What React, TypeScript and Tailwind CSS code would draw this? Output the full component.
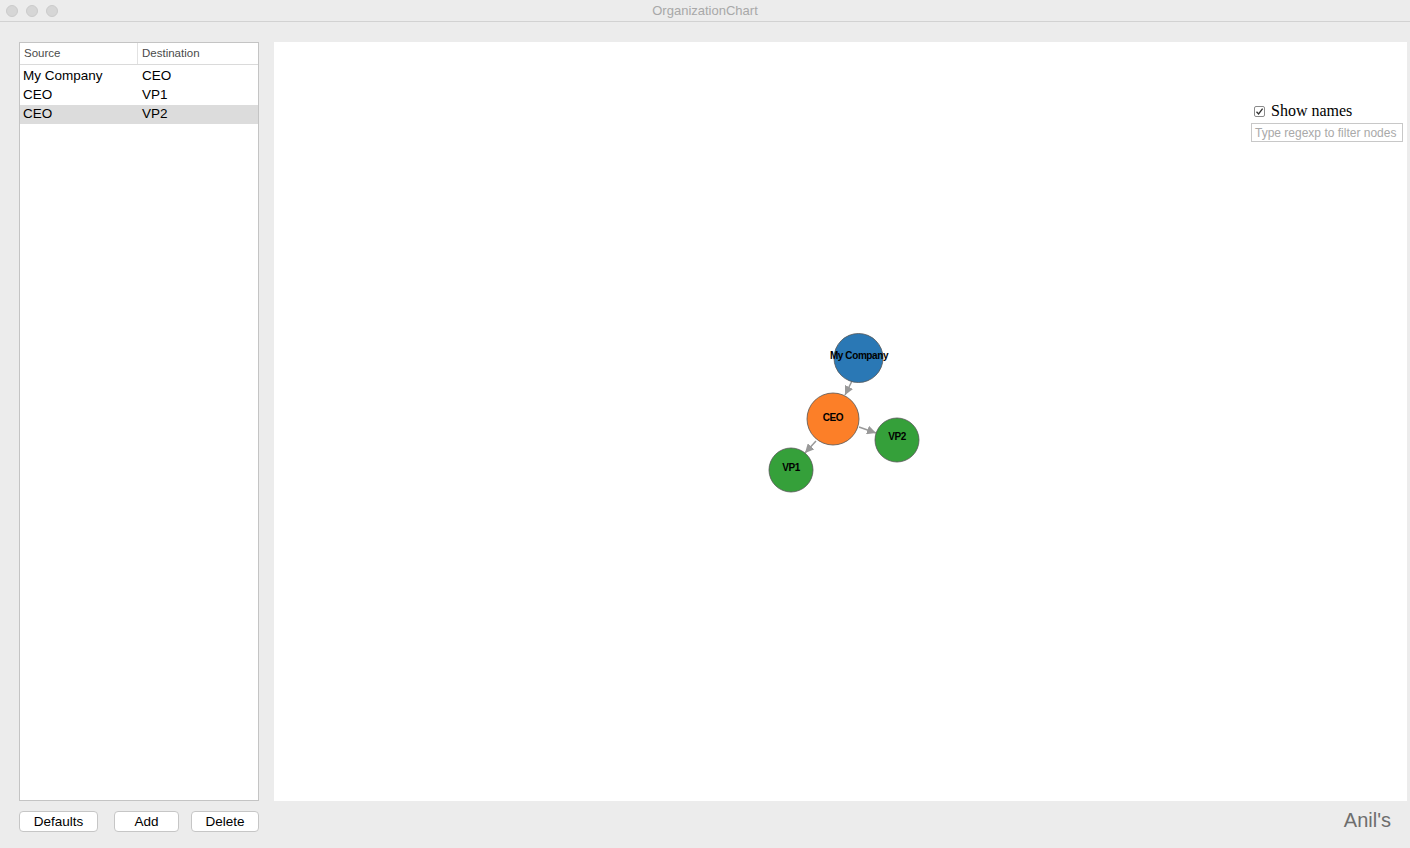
import React from "react";

const font = { fontFamily: '"Liberation Sans", Arial, sans-serif' };

function Graph() {
  return (
    <svg width="1133" height="759" className="block">
      <defs>
        <marker id="arr" viewBox="0 0 10 10" refX="10" refY="5" markerWidth="6" markerHeight="6" orient="auto">
          <path d="M0,0 L10,5 L0,10 z" fill="#999" />
        </marker>
      </defs>
      <g transform="translate(-274,-42)">
        <line x1="852" y1="381" x2="845" y2="395" stroke="#999" strokeWidth="1.5" markerEnd="url(#arr)" />
        <line x1="859" y1="427" x2="876" y2="433" stroke="#999" strokeWidth="1.5" markerEnd="url(#arr)" />
        <line x1="816" y1="441" x2="805" y2="453" stroke="#999" strokeWidth="1.5" markerEnd="url(#arr)" />
        <circle cx="858.5" cy="358" r="24.5" fill="#2a78b5" stroke="#555" strokeWidth="0.8" />
        <circle cx="833" cy="419" r="26" fill="#fc7f28" stroke="#555" strokeWidth="0.8" />
        <circle cx="897" cy="440" r="22" fill="#35a03a" stroke="#555" strokeWidth="0.8" />
        <circle cx="791" cy="470" r="22" fill="#35a03a" stroke="#555" strokeWidth="0.8" />
        <g fontFamily='"Liberation Sans", Arial, sans-serif' fontSize="10" fontWeight="bold" fill="#000" textAnchor="middle" letterSpacing="-0.4">
          <text x="859" y="359">My Company</text>
          <text x="833" y="421">CEO</text>
          <text x="897" y="440">VP2</text>
          <text x="791" y="471">VP1</text>
        </g>
      </g>
    </svg>
  );
}

export default function App() {
  const rows = [
    ["My Company", "CEO", false],
    ["CEO", "VP1", false],
    ["CEO", "VP2", true],
  ] as const;
  return (
    <div className="w-[1410px] h-[848px] bg-[#ececec] flex flex-col overflow-hidden" style={font}>
      <div className="h-[22px] shrink-0 bg-[#ececec] border-b border-[#d2d2d2] flex items-center relative">
        <div className="flex gap-[8px] pl-[6px] pt-[1px]">
          <div className="w-[12px] h-[12px] rounded-full bg-[#d6d6d6] border border-[#cbcbcb]" />
          <div className="w-[12px] h-[12px] rounded-full bg-[#d6d6d6] border border-[#cbcbcb]" />
          <div className="w-[12px] h-[12px] rounded-full bg-[#d6d6d6] border border-[#cbcbcb]" />
        </div>
        <div className="absolute inset-0 flex items-center justify-center pt-[1px] text-[13px] text-[#a8a8a8]">OrganizationChart</div>
      </div>
      <div className="flex pt-[20px] pl-[19px] gap-[15px]">
        <div className="w-[240px] h-[759px] bg-white border border-[#c4c4c4] flex flex-col">
          <div className="h-[22px] border-b border-[#dadada] flex items-center text-[11.5px] text-[#4a4a4a]">
            <div className="w-[118px] pl-[4px] h-full flex items-center border-r border-[#e2e2e2]">Source</div>
            <div className="pl-[4px]">Destination</div>
          </div>
          <div className="pt-[2px]">
            {rows.map(([s, d, sel], i) => (
              <div key={i} className={`h-[19px] flex items-center text-[13.5px] text-black ${sel ? "bg-[#dcdcdc]" : ""}`}>
                <div className="w-[119px] pl-[3px]">{s}</div>
                <div className="pl-[3px]">{d}</div>
              </div>
            ))}
          </div>
        </div>
        <div className="w-[1133px] h-[759px] bg-white relative">
          <Graph />
          <div className="absolute left-[977px] top-[59px] flex flex-col">
            <label className="flex items-center gap-[6px] pl-[3px]">
              <span className="w-[11px] h-[11px] border border-[#8a8a8a] rounded-[2px] bg-white flex items-center justify-center">
                <svg width="9" height="9" viewBox="0 0 9 9"><path d="M1.5 4.8 L3.6 7 L7.6 1.6" fill="none" stroke="#333" strokeWidth="1.3" /></svg>
              </span>
              <span className="text-[16px] leading-[20px] text-black" style={{ fontFamily: '"Liberation Serif", "Times New Roman", serif' }}>Show names</span>
            </label>
            <div className="mt-[2px] w-[152px] h-[19px] border border-[#c8c8c8] flex items-center pl-[3px] text-[12px] text-[#a9a9a9]">
              Type regexp to filter nodes
            </div>
          </div>
        </div>
      </div>
      <div className="flex items-start pl-[19px] pt-[10px] pr-[19px]">
        <div className="flex gap-[16px]">
          <button className="w-[79px] h-[21px] bg-white border border-[#c6c6c6] rounded-[4px] text-[13.5px] leading-[19px] text-black">Defaults</button>
          <button className="w-[65px] h-[21px] bg-white border border-[#c6c6c6] rounded-[4px] text-[13.5px] leading-[19px] text-black">Add</button>
          <button className="w-[68px] h-[21px] bg-white border border-[#c6c6c6] rounded-[4px] text-[13.5px] leading-[19px] text-black -ml-[4px]">Delete</button>
        </div>
        <div className="ml-auto text-[20px] leading-[24px] text-[#6e6e6e] -mt-[3px]">Anil's</div>
      </div>
    </div>
  );
}
